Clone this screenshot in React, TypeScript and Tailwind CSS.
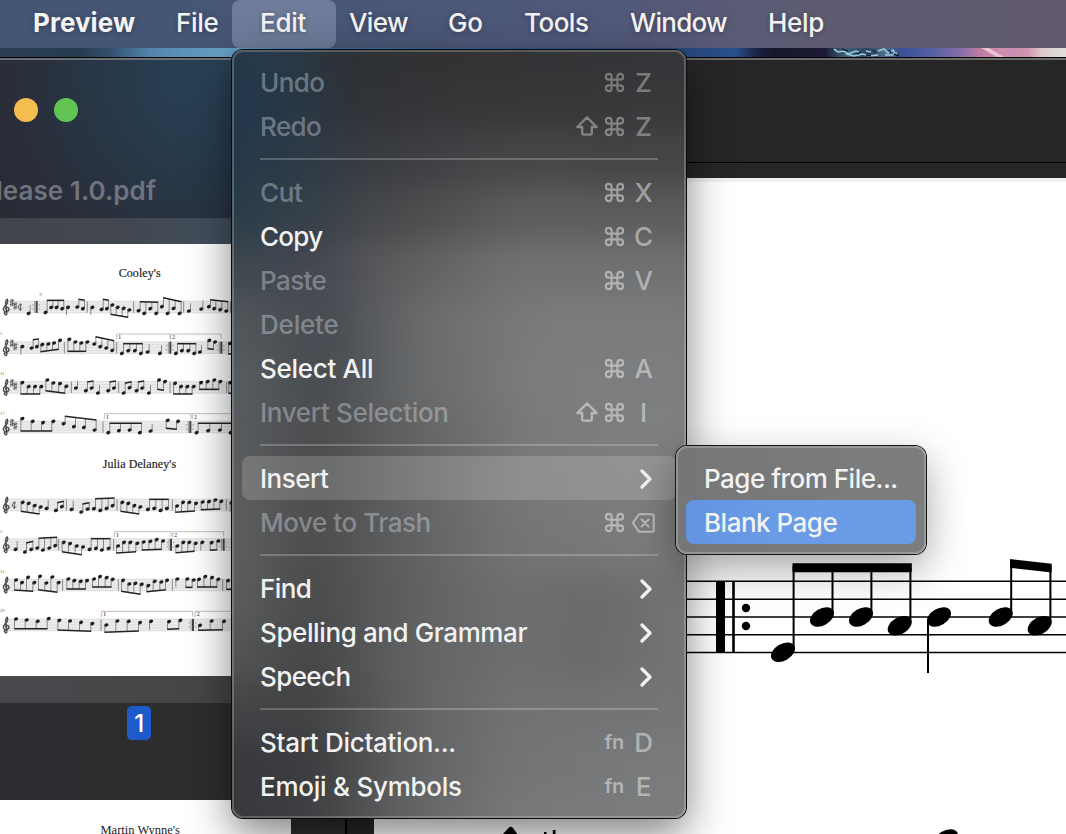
import React from "react";
import { Command } from "lucide-react";

/* ---------- thumbnail scores ---------- */

// Each group: [beamStartY, beamEndY, x1, y1, x2, y2, ...] in a 3x grid.
type Staff = {
  top: number;
  sharps?: boolean;
  cut?: number;
  bars: number[];
  heavy?: number[];
  voltas?: [number, number, number, string][];
  groups: number[][];
  label?: [number, number, string];
};

const cooleys: Staff[] = [
  {
    top: 214, sharps: true, cut: 60, bars: [262, 401, 551, 692], heavy: [110],
    label: [118, 199, "9"],
    groups: [
      [225, 225, 86, 250], [211, 211, 137, 247, 154, 232, 170, 232, 187, 236], [255, 255, 204, 232],
      [208, 211, 232, 231, 249, 236], [255, 255, 277, 232], [208, 211, 305, 238, 321, 236],
      [253, 262, 337, 225, 353, 232, 371, 235, 388, 240], [215, 217, 416, 242, 433, 250, 451, 236, 469, 250],
      [203, 215, 486, 230, 503, 250, 521, 235, 539, 250], [220, 220, 567, 243], [212, 212, 604, 237],
      [209, 215, 627, 230, 643, 236, 661, 239, 679, 243],
    ],
  },
  {
    top: 336, sharps: true, bars: [193, 350], heavy: [511, 664],
    voltas: [[350, 510, 312, "1"], [512, 663, 312, "2"]], label: [0, 314, "5"],
    groups: [
      [374, 374, 67, 350], [329, 327, 95, 354, 111, 350], [365, 358, 127, 344, 145, 342, 162, 339, 180, 331],
      [364, 364, 208, 328, 226, 336, 244, 339, 262, 336], [320, 332, 283, 342, 301, 350, 319, 354, 337, 361],
      [341, 341, 366, 370, 385, 362, 405, 362, 423, 370], [342, 342, 443, 366], [345, 345, 480, 370],
      [341, 341, 528, 370, 546, 362, 565, 362, 583, 370], [345, 345, 600, 366], [356, 358, 628, 331, 645, 336],
      [372, 372, 690, 340, 704, 342],
    ],
  },
  {
    top: 455, sharps: true, bars: [214, 356, 510, 680], label: [0, 436, "11"],
    groups: [
      [492, 492, 67, 458, 86, 470, 105, 470, 124, 470], [482, 490, 142, 450, 160, 459, 180, 461, 199, 469],
      [452, 452, 228, 474], [456, 453, 258, 482, 275, 474], [465, 465, 294, 489], [456, 453, 325, 482, 342, 474],
      [460, 455, 371, 489, 389, 473], [456, 453, 410, 482, 427, 474], [465, 465, 447, 489], [478, 481, 477, 450, 495, 455],
      [492, 492, 525, 460, 543, 470, 562, 470, 581, 470], [478, 478, 603, 458, 623, 455, 643, 450, 661, 455],
      [490, 490, 691, 458, 706, 460],
    ],
  },
  {
    top: 574, sharps: true, bars: [309], heavy: [571],
    voltas: [[313, 573, 551, "1"], [577, 700, 551, "2"]], label: [0, 554, "17"],
    groups: [
      [603, 603, 67, 566, 98, 574, 129, 578, 160, 574], [559, 570, 191, 581, 222, 590, 252, 592, 284, 600],
      [580, 580, 325, 608, 357, 602, 389, 600, 420, 608], [582, 582, 452, 603], [595, 598, 503, 571, 534, 574],
      [580, 580, 590, 608, 625, 602, 660, 600, 692, 608],
    ],
  },
];

const julia: Staff[] = [
  {
    top: 178, cut: 42, bars: [199, 351, 517, 679],
    groups: [
      [214, 222, 68, 187, 86, 190, 104, 197, 122, 201], [180, 180, 140, 205], [188, 184, 168, 211, 186, 200],
      [182, 182, 215, 208], [192, 188, 244, 216, 263, 207], [176, 174, 282, 206, 301, 211, 320, 205, 338, 197],
      [214, 222, 367, 187, 385, 190, 403, 197, 421, 201], [178, 178, 444, 208, 463, 205, 482, 211, 501, 205],
      [217, 213, 531, 198, 549, 187, 568, 187, 588, 190], [209, 207, 608, 186, 627, 185, 646, 180, 664, 184],
      [216, 216, 695, 188],
    ],
  },
  {
    top: 297, bars: [176, 341], heavy: [513, 671],
    voltas: [[343, 513, 275, "1"], [518, 671, 275, "2"]], label: [0, 278, "5"],
    groups: [
      [303, 303, 47, 328], [309, 304, 75, 336, 94, 328], [295, 292, 112, 324, 129, 330, 148, 324, 166, 317],
      [335, 344, 191, 307, 210, 311, 230, 318, 249, 321], [296, 296, 269, 328, 288, 325, 306, 330, 326, 325],
      [339, 335, 354, 318, 372, 307, 391, 307, 412, 310], [330, 328, 431, 306, 451, 304, 470, 299, 489, 303],
      [338, 334, 532, 318, 550, 307, 568, 307, 587, 310], [332, 332, 607, 307], [331, 329, 635, 308, 655, 303],
    ],
  },
  {
    top: 418, bars: [188, 355, 517, 668], label: [0, 398, "11"],
    groups: [
      [450, 454, 48, 420, 66, 428, 84, 412, 103, 428], [449, 457, 120, 409, 139, 429, 157, 411, 176, 428],
      [447, 447, 205, 417, 223, 422, 242, 424, 261, 422], [441, 441, 282, 417, 300, 410, 320, 413, 338, 418],
      [454, 463, 369, 421, 388, 432, 406, 430, 425, 433], [455, 449, 445, 437, 464, 424, 484, 426, 501, 421],
      [442, 442, 532, 417], [442, 442, 562, 417, 581, 420], [441, 441, 597, 418, 616, 410, 636, 413, 655, 418],
      [448, 448, 684, 422, 702, 424],
    ],
  },
  {
    top: 538, bars: [303], heavy: [579],
    voltas: [[305, 578, 514, "1"], [585, 700, 514, "2"]], label: [0, 517, "29"],
    groups: [
      [566, 566, 48, 537, 80, 540, 113, 544, 146, 536], [570, 574, 178, 541, 210, 543, 243, 547, 277, 551],
      [577, 573, 319, 555, 352, 543, 386, 544, 420, 548], [570, 570, 453, 544], [568, 566, 507, 545, 541, 541],
      [571, 569, 600, 556, 635, 543, 672, 544],
    ],
  },
];

function StaffLine({ s }: { s: Staff }) {
  const mid = s.top + 17;
  return (
    <g>
      <rect x="12" y={s.top - 2} width="690" height="38" fill="#ececec" />
      {[0, 8.5, 17, 25.5, 34].map((d) => (
        <path key={d} d={`M12 ${s.top + d}H702`} stroke="#d0d0d0" strokeWidth="1.4" />
      ))}
      <path
        d={`M16 ${mid + 22}C10 ${mid + 20} 13 ${mid + 14} 17 ${mid + 18}M21 ${mid + 20}L17 ${mid - 14}C18 ${mid - 24} 24 ${mid - 28} 23 ${mid - 15}C20 ${mid - 4} 9 ${mid - 2} 10 ${mid + 8}C12 ${mid + 17} 28 ${mid + 14} 27 ${mid + 6}C25 ${mid - 2} 15 ${mid} 17 ${mid + 7}M21 ${mid + 20}C20 ${mid + 25} 16 ${mid + 25} 16 ${mid + 22}`}
        fill="none"
        stroke="#444"
        strokeWidth="3.8"
      />
      {s.sharps &&
        [[35, -14], [45, -4]].map(([x, d]) => (
          <path
            key={x}
            d={`M${x - 2} ${mid + d - 10}v22M${x + 3} ${mid + d - 11}v22M${x - 5} ${mid + d - 2}l12 -4M${x - 5} ${mid + d + 7}l12 -4`}
            stroke="#555"
            strokeWidth="2.6"
          />
        ))}
      {s.cut && (
        <path
          d={`M${s.cut + 6} ${mid - 5}C${s.cut} ${mid - 11} ${s.cut - 5} ${mid - 5} ${s.cut - 5} ${mid}C${s.cut - 5} ${mid + 8} ${s.cut + 2} ${mid + 10} ${s.cut + 7} ${mid + 4}M${s.cut + 1} ${mid - 11}v23`}
          fill="none"
          stroke="#555"
          strokeWidth="3"
        />
      )}
      {s.bars.map((x) => (
        <path key={x} d={`M${x} ${s.top}v34`} stroke="#707070" strokeWidth="2.4" />
      ))}
      {s.heavy?.map((x) => (
        <g key={x}>
          <path d={`M${x} ${s.top - 1}v36`} stroke="#444" strokeWidth="6" />
          <path d={`M${x - 6} ${s.top}v34M${x + 8} ${mid - 8}v4M${x + 8} ${mid + 4}v4M${x - 11} ${mid - 8}v4M${x - 11} ${mid + 4}v4`} stroke="#888" strokeWidth="2.5" />
        </g>
      ))}
      {s.voltas?.map(([a, b, y, n]) => (
        <g key={a}>
          <path d={`M${a} ${y + 17}V${y}H${b}V${y + 15}`} fill="none" stroke="#a0a0a0" strokeWidth="2" />
          <text x={a + 5} y={y + 15} fontSize="17" fontWeight="700" fill="#666">{n}</text>
        </g>
      ))}
      {s.label && (
        <text x={s.label[0]} y={s.label[1]} fontSize="14" fill="#666">{s.label[2]}</text>
      )}
      {s.groups.map((g, i) => {
        const pts: [number, number][] = [];
        for (let k = 2; k < g.length; k += 2) pts.push([g[k], g[k + 1]]);
        const up = g[0] < pts[0][1];
        const off = up ? 4.5 : -4.5;
        const x0 = pts[0][0] + off;
        const x1 = pts[pts.length - 1][0] + off;
        const beamAt = (x: number) => (x1 === x0 ? g[0] : g[0] + ((g[1] - g[0]) * (x - x0)) / (x1 - x0));
        return (
          <g key={i}>
            {pts.map(([x, y]) => (
              <g key={x}>
                <ellipse cx={x} cy={y} rx="6.5" ry="5" transform={`rotate(-22 ${x} ${y})`} fill="#1c1c1c" />
                <path d={`M${x + off} ${y}V${beamAt(x + off)}`} stroke="#666" strokeWidth="2.2" />
              </g>
            ))}
            {pts.length > 1 && <path d={`M${x0 - 1} ${g[0]}L${x1 + 1} ${g[1]}`} stroke="#222" strokeWidth="4.6" />}
          </g>
        );
      })}
    </g>
  );
}

function ThumbnailScore() {
  return (
    <svg width="232" height="432" viewBox="0 42 696 1296" className="block" fontFamily="Liberation Serif, serif">
      <text x="356" y="142" fontSize="36" fill="#222" textLength="126" stroke="#222" strokeWidth=".5">Cooley's</text>
      {cooleys.map((s) => <StaffLine key={s.top} s={s} />)}
      <g transform="translate(0 630)">
        <text x="308" y="85" fontSize="36" fill="#222" textLength="220" stroke="#222" strokeWidth=".5">Julia Delaney's</text>
        {julia.map((s) => <StaffLine key={s.top} s={s} />)}
      </g>
    </svg>
  );
}

/* ---------- main score ---------- */

function MainScore() {
  const heads = [[783, 652.3], [822, 617], [861, 617], [899.7, 625.7], [939, 617], [1000.7, 617], [1039.7, 625.7]];
  return (
    <svg width="692" height="656" viewBox="374 178 692 656" className="block">
      {[581.3, 599.2, 617, 634.7, 652.5].map((y) => (
        <path key={y} d={`M374 ${y}H1066`} stroke="#000" strokeWidth="1.4" />
      ))}
      <path d="M716 581h9v71.5h-9zM732.2 581h2.6v71.5h-2.6z" />
      <circle cx="746" cy="608" r="4.2" />
      <circle cx="746" cy="626" r="4.2" />
      <path d="M792.5 563.3h119.3v9H792.5zM1010 559l41.7 4.7v8.8L1010 567.8z" />
      <path d="M793.6 566V650M832.5 568V615M871.4 568V615M910.4 568V623M928 619V673M1011.2 562V615M1050.4 566V623" stroke="#000" strokeWidth="2" />
      {heads.map(([x, y]) => (
        <ellipse key={x} cx={x} cy={y} rx="13" ry="8.3" transform={`rotate(-30 ${x} ${y})`} />
      ))}
      <path d="M502 835L508.500 828Q510.700 825.500 513 828L518 835zM544 832h2.500v3H544zM552.800 830h2.700v5h-2.700z" />
      <ellipse cx="946" cy="839" rx="13" ry="8.300" transform="rotate(-30 946 839)" />
    </svg>
  );
}

/* ---------- menu pieces ---------- */

const bands = [
  "bg-[linear-gradient(90deg,#24384a_30px,#293a48_90px,#2c3135_140px,#313133_230px,#343539_484px)]",
  "bg-[linear-gradient(90deg,#22374b_30px,#293745_100px,#303236_160px,#363638_260px,#38383a_484px)]",
  "bg-[linear-gradient(90deg,#24384a_30px,#2f3a46_110px,#3a3c40_180px,#464648_300px,#454547_484px)]",
  "bg-[linear-gradient(90deg,#2a3c49_30px,#364049_110px,#49494b_190px,#5d5d5e_320px,#5c5c5d_484px)]",
  "bg-[linear-gradient(90deg,#3f484f_30px,#434650_110px,#5c5c5d_190px,#707172_310px,#707172_484px)]",
  "bg-[linear-gradient(90deg,#52575b_30px,#474b51_125px,#6a6b6c_220px,#7a7b7c_340px,#7a7b7c_484px)]",
  "bg-[linear-gradient(90deg,#575d61_30px,#474b4f_120px,#66686a_210px,#7b7c7d_330px,#7d7e7f_484px)]",
  "bg-[linear-gradient(90deg,#595c5f_30px,#4b4c4e_115px,#626364_210px,#797a7b_330px,#7f8081_484px)]",
  "bg-[linear-gradient(90deg,#5e5f60_30px,#4d4d4e_115px,#616263_210px,#767778_310px,#7e7f80_484px)]",
  "bg-[linear-gradient(90deg,#5e5f60_30px,#4c4c4d_110px,#606162_210px,#737475_310px,#7c7d7e_484px)]",
  "bg-[linear-gradient(90deg,#5c5d5d_30px,#494a4b_110px,#5f6061_210px,#6d6e6f_310px,#696a6b_400px,#747576_484px)]",
  "bg-[linear-gradient(90deg,#545555_30px,#454647_110px,#616263_210px,#6d6e6f_310px,#696a6b_390px,#747576_484px)]",
  "bg-[linear-gradient(90deg,#434446_30px,#414244_110px,#616263_210px,#717273_310px,#747576_484px)]",
  "bg-[linear-gradient(90deg,#37383c_30px,#3d3e40_110px,#606162_210px,#737475_310px,#7a7b7c_484px)]",
  "bg-[linear-gradient(90deg,#38393d_30px,#3e3f41_110px,#646566_210px,#777879_310px,#7d7e7f_484px)]",
];

function ShiftGlyph() {
  return (
    <svg width="22" height="20" viewBox="0 0 22 20" fill="none" stroke="currentColor" strokeWidth="2.3" strokeLinejoin="round">
      <path d="M11 1.4L20.700 11H15.800V17.400Q15.800 18.700 14.500 18.700H7.500Q6.200 18.700 6.200 17.400V11H1.300Z" />
    </svg>
  );
}

function DeleteGlyph() {
  return (
    <svg width="23" height="20" viewBox="0 0 23 20" fill="none" stroke="currentColor" strokeWidth="2.1" strokeLinejoin="round" strokeLinecap="round">
      <path d="M7.800 1.300H20Q21.700 1.300 21.700 3V17Q21.700 18.700 20 18.700H7.800Q7 18.700 6.400 18L1.600 11Q1 10 1.600 9L6.400 2Q7 1.300 7.800 1.300Z" />
      <path d="M9.600 6.500L16.600 13.500M16.600 6.500L9.600 13.500" />
    </svg>
  );
}

type Item = {
  label: string;
  off?: boolean;
  mods?: ("shift" | "cmd" | "fn")[];
  keyName?: string;
  sub?: boolean;
  open?: boolean;
  hint?: string;
  track?: string;
};

const sections: Item[][] = [
  [
    { label: "Undo", off: true, mods: ["cmd"], keyName: "Z", hint: "text-white/34", track: "tracking-[-0.6px]" },
    { label: "Redo", off: true, mods: ["shift", "cmd"], keyName: "Z", hint: "text-white/37", track: "tracking-[-0.6px]" },
  ],
  [
    { label: "Cut", off: true, mods: ["cmd"], keyName: "X" },
    { label: "Copy", mods: ["cmd"], keyName: "C", track: "tracking-[-0.7px]" },
    { label: "Paste", off: true, mods: ["cmd"], keyName: "V", track: "tracking-[-0.6px]" },
    { label: "Delete", off: true, track: "tracking-[-0.2px]" },
    { label: "Select All", mods: ["cmd"], keyName: "A", track: "tracking-[-0.3px]" },
    { label: "Invert Selection", off: true, mods: ["shift", "cmd"], keyName: "I", track: "tracking-[-0.33px]" },
  ],
  [
    { label: "Insert", sub: true, open: true, track: "tracking-[-0.5px]" },
    { label: "Move to Trash", off: true, mods: ["cmd"], keyName: "del", track: "tracking-[-0.46px]" },
  ],
  [
    { label: "Find", sub: true, track: "tracking-[-0.6px]" },
    { label: "Spelling and Grammar", sub: true },
    { label: "Speech", sub: true, track: "tracking-[-0.6px]" },
  ],
  [
    { label: "Start Dictation...", mods: ["fn"], keyName: "D", track: "tracking-[-0.3px]" },
    { label: "Emoji & Symbols", mods: ["fn"], keyName: "E", track: "tracking-[-0.25px]" },
  ],
];

function MenuRow({ item }: { item: Item }) {
  return (
    <div
      className={`flex h-11 items-center rounded-[8px] pl-[18px] pr-5 ${item.open ? "bg-white/17" : ""} ${item.off ? "text-[#e8eff8]/37" : "text-[#f2f2f2]"}`}
    >
      <span className={`flex-1 whitespace-pre pt-px ${item.track ?? "tracking-[-0.4px]"}`}>{item.label}</span>
      {item.sub && (
        <svg width="12" height="20" viewBox="0 0 12 20" className="mr-1 mt-[2px]" fill="none" stroke="currentColor" strokeWidth="3.2" strokeLinecap="round" strokeLinejoin="round">
          <path d="M2 2L10 10L2 18" />
        </svg>
      )}
      {item.mods && (
        <div className={`flex items-center ${item.hint ?? "text-white/46"}`}>
          {item.mods.map((m) =>
            m === "cmd" ? (
              <Command key={m} size={23} strokeWidth={2.2} className="ml-[5px]" />
            ) : m === "shift" ? (
              <ShiftGlyph key={m} />
            ) : (
              <span key={m} className="mr-[2px] text-[20px] font-semibold tracking-[-0.2px]">fn</span>
            ),
          )}
          <span className="ml-[5px] flex w-[25px] justify-center pt-px">
            {item.keyName === "del" ? <DeleteGlyph /> : item.keyName}
          </span>
        </div>
      )}
    </div>
  );
}

function EditMenu() {
  return (
    <div className="absolute left-[232px] top-[50px] h-[768px] w-[454px] rounded-[11px] bg-[linear-gradient(90deg,#4a4f54,#707172)] shadow-[0_0_0_1px_#0a0a0a,0_16px_44px_rgba(0,0,0,0.5)]">
      <div className="absolute inset-0 overflow-hidden rounded-[11px]">
        <div className="absolute -inset-[30px] flex flex-col blur-[16px]">
          {bands.map((b, i) => (
            <div key={i} className={`flex-1 ${b}`} />
          ))}
        </div>
      </div>
      <div className="relative h-full rounded-[11px] p-[10px] shadow-[inset_0_0_0_2px_rgba(255,255,255,0.2)]">
        {sections.map((items, i) => (
          <React.Fragment key={i}>
            {i > 0 && (
              <div className="flex h-[22px] items-center px-[18px]">
                <div className="h-[2px] w-full bg-white/22" />
              </div>
            )}
            {items.map((it) => (
              <MenuRow key={it.label} item={it} />
            ))}
          </React.Fragment>
        ))}
      </div>
    </div>
  );
}

function InsertSubmenu() {
  return (
    <div className="absolute left-[676px] top-[446px] h-[108px] w-[250px] rounded-[11px] bg-[linear-gradient(90deg,#757677,#7c7d7e)] p-[10px] tracking-[-0.5px] text-[#f2f2f2] shadow-[0_0_0_1px_#161616,0_14px_40px_rgba(0,0,0,0.36),inset_0_0_0_2px_rgba(255,255,255,0.22)]">
      <div className="flex h-11 items-center pl-[18px] pt-px">Page from File...</div>
      <div className="flex h-11 items-center rounded-[8px] bg-[linear-gradient(90deg,#6294e3,#699be6_40%)] pl-[18px] pt-px">Blank Page</div>
    </div>
  );
}

/* ---------- menu bar ---------- */

const barItems = [
  { label: "Preview", cls: "w-[131px] pl-[33px] font-bold tracking-[0.05px]" },
  { label: "File", cls: "ml-[32px] w-[69px] pl-[13px]" },
  { label: "Edit", cls: "w-[104px] pl-[28px] rounded-[8px] bg-[#6e7b99]" },
  { label: "View", cls: "w-[98px] pl-[13px] tracking-[-0.6px]" },
  { label: "Go", cls: "w-[78px] pl-[14px]" },
  { label: "Tools", cls: "w-[106px] pl-[12px] tracking-[-0.5px]" },
  { label: "Window", cls: "w-[136px] pl-[12px] tracking-[-0.7px]" },
  { label: "Help", cls: "pl-[14px]" },
];

function MenuBar() {
  return (
    <div className="flex h-12 bg-[linear-gradient(90deg,#445576_0%,#465674_25%,#50587a_55%,#5d5b74_75%,#60596d_100%)] text-[#f3f3f3] [text-shadow:0_1px_5px_rgba(0,0,0,0.3)]">
      {barItems.map((b) => (
        <div key={b.label} className={`flex h-12 shrink-0 items-center pb-[2px] ${b.cls}`}>
          {b.label}
        </div>
      ))}
    </div>
  );
}

/* ---------- document window ---------- */

function Wallpaper() {
  return (
    <div className="h-[9px] bg-[linear-gradient(90deg,#2a3f52_0,#263c50_80px,#34506e_110px,#5384ad_150px,#64a2c6_220px,#3d6ea2_330px,#274a7c_690px,#28508a_735px,#1b2040_758px,#17172c_775px,#1b1c34_825px,#41627c_845px,#2f4360_868px,#4d6f8c_885px,#3a508c_898px,#40559c_910px,#5a62a6_935px,#8a6ea8_962px,#c07ba6_980px,#d08cae_1000px,#c88fb2_1010px,#cf95ae_1028px,#dccbcb_1042px,#e0dfdb_1066px)]">
      <svg width="1066" height="9" className="block" fill="none">
        <path d="M834 1l4 3 6 -1 4 3 8 -3 5 2M846 6l8 2 9 -2 6 2 9 -1M866 3l5 1M878 3l6 -2 4 4 5 -3 3 5M885 7l7 0 5 -2" stroke="#94cbd8" strokeWidth="1.600" />
        <path d="M842 1l6 2M857 6l4 -2M873 2l3 3M889 2l2 3M866 7l5 1M894 6l5 2" stroke="#16203a" strokeWidth="1.600" />
        <path d="M981 0l16 9h7l-15 -9z" fill="#ecc3d2" />
      </svg>
    </div>
  );
}

function Sidebar() {
  return (
    <div className="flex w-[345px] shrink-0 flex-col bg-[#2d2e30]">
      <div className="flex h-[158px] flex-col bg-[radial-gradient(circle_at_215px_10px,#294157_0,#273b4d_80px,#292f3b_190px,#292b35_260px)]">
        <div className="flex gap-4 pl-[14px] pt-[38px]">
          <span className="size-6 rounded-full bg-[#f5bd4f]" />
          <span className="size-6 rounded-full bg-[#61c454]" />
        </div>
        <div className="-ml-[4px] mt-[53px] whitespace-nowrap font-semibold leading-[32px] tracking-[0.05px] text-[#6e737d]">lease 1.0.pdf</div>
      </div>
      <div className="h-[26px] bg-[linear-gradient(90deg,#43454e_0,#42464f_120px,#41505e_232px)]" />
      <div className="h-[432px] w-[291px] bg-white">
        <ThumbnailScore />
      </div>
      <div className="h-[27px] bg-[linear-gradient(90deg,#48494d,#454545_232px)]" />
      <div className="flex h-[97px] items-start bg-[linear-gradient(90deg,#2d2e32,#2d2d2d_232px)] pl-[127px] pt-[3px]">
        <span className="flex h-[34px] w-6 items-center justify-center rounded-[5px] bg-[#1d5bcb] pt-[2px] text-[24px] font-medium text-white">1</span>
      </div>
      <div className="h-[34px] w-[291px] bg-white">
        <svg width="291" height="34" className="block" fontFamily="Liberation Serif, serif">
          <text x="100.500" y="34" fontSize="12.500" fill="#222" textLength="79">Martin Wynne's</text>
        </svg>
      </div>
    </div>
  );
}

function DocumentWindow() {
  return (
    <div className="flex h-[777px] flex-col border-t border-black">
      <div className="h-[2px] bg-[linear-gradient(90deg,#6a6f73,#66717a_220px,#686968_700px,#6b6c6a)]" />
      <div className="flex min-h-0 flex-1">
        <Sidebar />
        <div className="w-[2px] bg-black" />
        <div className="flex flex-1 flex-col bg-[#262626]">
          <div className="h-[102px]" />
          <div className="h-px bg-black" />
          <div className="h-[15px]" />
          <div className="ml-[27px] h-[656px] bg-white shadow-[inset_0_4px_0_#f1f1f1]">
            <MainScore />
          </div>
        </div>
      </div>
    </div>
  );
}

export default function App() {
  return (
    <div className="relative h-[834px] w-[1066px] overflow-hidden bg-[#262626] font-['Inter','Liberation_Sans',sans-serif] text-[26px] font-[450] leading-none tracking-[-0.3px]">
      <MenuBar />
      <Wallpaper />
      <DocumentWindow />
      <EditMenu />
      <InsertSubmenu />
    </div>
  );
}
